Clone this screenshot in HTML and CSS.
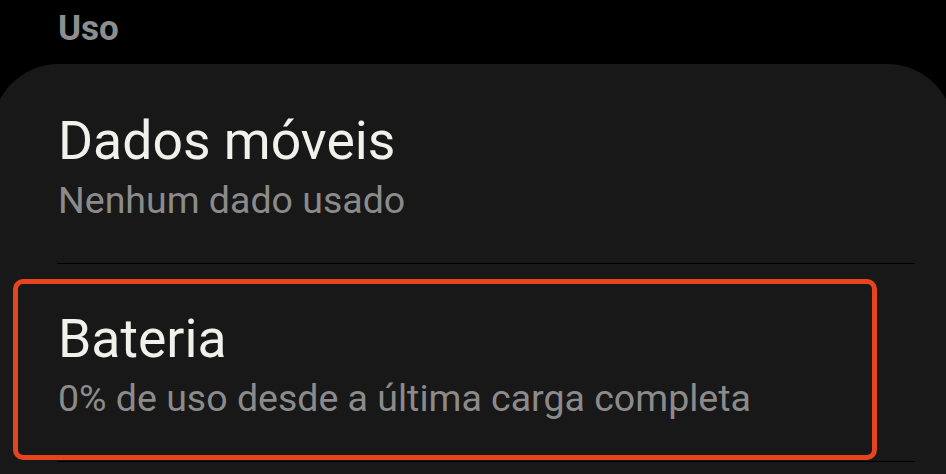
FILE: index.html
```html
<!DOCTYPE html>
<html lang="pt">
<head>
  <meta charset="UTF-8">
  <meta name="viewport" content="width=device-width, initial-scale=1.0">
  <title>Uso</title>
  <link rel="stylesheet" href="styles.css">
</head>
<body>
  <div class="screen">
    <h2 class="section-title">Uso</h2>
    <div class="card">
      <div class="item">
        <div class="item-title">Dados móveis</div>
        <div class="item-summary">Nenhum dado usado</div>
      </div>
      <div class="item">
        <div class="highlight"></div>
        <div class="item-title">Bateria</div>
        <div class="item-summary">0% de uso desde a última carga completa</div>
      </div>
    </div>
  </div>
</body>
</html>
```

FILE: styles.css
```css
body {
  margin: 0;
  padding: 0;
  background: #000;
  font-family: Roboto, 'Noto Sans', sans-serif;
  overflow: hidden;
}

.screen {
  height: 474px;
  overflow: hidden;
}

.section-title {
  margin: 0;
  padding-left: 58px;
  height: 64px;
  font-size: 35px;
  font-weight: 700;
  line-height: 57px;
  color: #8e8e8e; /* grey header */
}

.card {
  margin: 0 -8px;
  padding-top: 2px;
  height: 408px;
  background: #181818;
  border-radius: 67px 67px 0 0;
}

.item {
  position: relative;
  margin: 0 39px 0 65px;
  padding: 44px 0 34px 1px;
  border-bottom: 1px solid #000;
}

.item-title {
  font-size: 53.5px;
  line-height: 62px;
  color: #f1f1ec;
}

.item-summary {
  font-size: 37.5px;
  line-height: 57px;
  color: #8b8b8b;
}

/* orange box drawn over the Bateria row */
.highlight {
  position: absolute;
  left: -44px;
  top: 15px;
  width: 864px;
  height: 181px;
  box-sizing: border-box;
  border: 5px solid #e6431f;
  border-radius: 10px;
}
```
